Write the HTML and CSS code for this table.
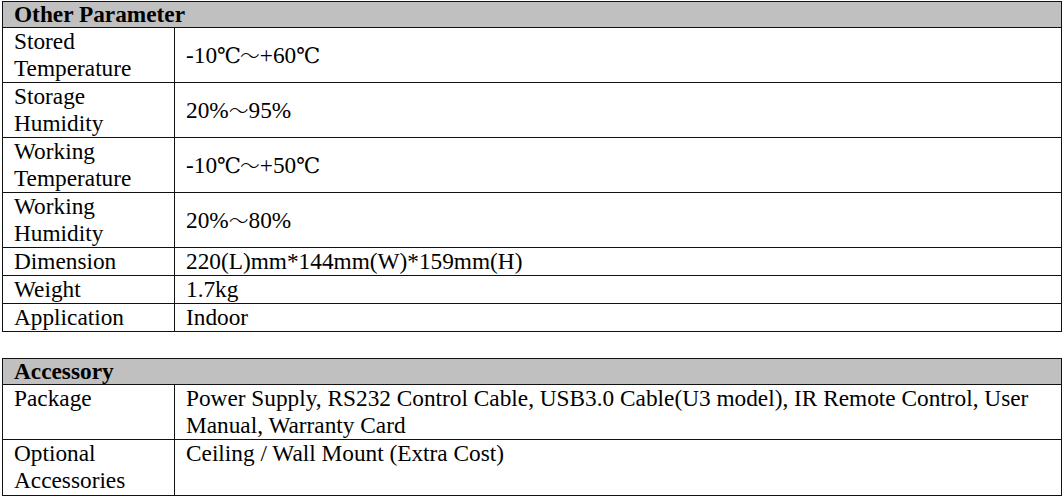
FILE: index.html
```html
<!DOCTYPE html>
<html>
<head>
<meta charset="utf-8">
<link rel="stylesheet" href="styles.css">
</head>
<body>
<table class="spec">
  <colgroup><col class="c1"><col></colgroup>
  <tr class="head"><th colspan="2">Other Parameter</th></tr>
  <tr class="two"><td>Stored<br>Temperature</td><td class="mid">-10<span class="deg">℃</span><span class="wave">～</span>+60<span class="deg">℃</span></td></tr>
  <tr class="two"><td>Storage<br>Humidity</td><td class="mid">20%<span class="wave">～</span>95%</td></tr>
  <tr class="two"><td>Working<br>Temperature</td><td class="mid">-10<span class="deg">℃</span><span class="wave">～</span>+50<span class="deg">℃</span></td></tr>
  <tr class="two"><td>Working<br>Humidity</td><td class="mid">20%<span class="wave">～</span>80%</td></tr>
  <tr class="one"><td>Dimension</td><td>220(L)mm*144mm(W)*159mm(H)</td></tr>
  <tr class="one"><td>Weight</td><td>1.7kg</td></tr>
  <tr class="one"><td>Application</td><td>Indoor</td></tr>
</table>
<table class="spec second">
  <colgroup><col class="c1"><col></colgroup>
  <tr class="head"><th colspan="2">Accessory</th></tr>
  <tr class="two"><td>Package</td><td>Power Supply, RS232 Control Cable, USB3.0 Cable(U3 model), IR Remote Control, User Manual, Warranty Card</td></tr>
  <tr class="two tall"><td>Optional<br>Accessories</td><td>Ceiling / Wall Mount (Extra Cost)</td></tr>
</table>
</body>
</html>
```

FILE: styles.css
```css
html, body {
  margin: 0;
  padding: 0;
  background: #fff;
}
body {
  padding: 1px 1px 0 2px;
  font-family: "Liberation Serif", "Noto Sans CJK SC", serif;
  font-size: 23.3px;
  color: #000;
}
.spec {
  width: 1060px;
  border-collapse: collapse;
  border: 1.5px solid #555;
  table-layout: fixed;
}
.spec .c1 { width: 172px; }
.spec th, .spec td {
  border: 1px solid #111;
  padding: 0 0 0 11px;
  line-height: 27px;
  text-align: left;
  vertical-align: top;
}
.spec td.mid { vertical-align: middle; }
.spec .head th {
  background: #c0c0c0;
  font-weight: bold;
  height: 25px;
  line-height: 25px;
  padding-left: 11px;
  border-bottom: 1.5px solid #111;
}
.spec tr.two td { height: 54px; }
.spec tr.tall td { height: 55px; }
.spec tr.one td { height: 27px; }
.second { margin-top: 26px; }
.deg {
  font-family: "DejaVu Serif", "Noto Sans CJK SC", serif;
  font-size: 0.92em;
  letter-spacing: -1px;
}
.wave {
  font-family: "Noto Sans CJK SC", sans-serif;
  font-weight: 300;
  font-size: 0.85em;
}
```
